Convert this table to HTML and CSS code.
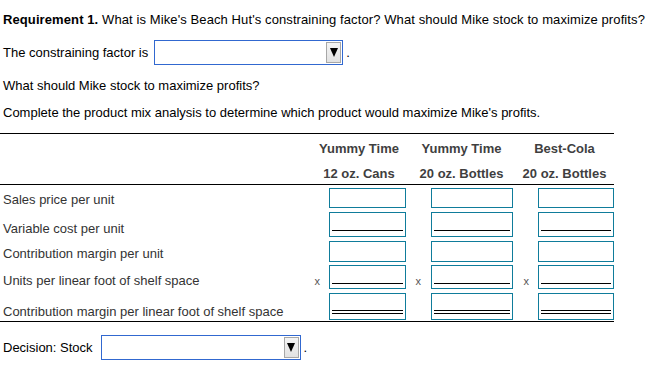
FILE: index.html
```html
<!DOCTYPE html>
<html lang="en">
<head>
    <meta charset="UTF-8">
    <title>Product Mix Analysis</title>
    <link rel="stylesheet" href="styles.css">
</head>
<body>
    <p class="req"><b>Requirement 1.</b> What is Mike's Beach Hut's constraining factor? What should Mike stock to maximize profits?</p>
    <div class="pick first">
        <span>The constraining factor is</span>
        <span class="select">
            <span class="arrow">
                <svg width="8" height="9" viewBox="0 0 8 9"><polygon points="0,0 8,0 4,9" fill="#000"/></svg>
            </span>
        </span>
        <span>.</span>
    </div>
    <p class="q">What should Mike stock to maximize profits?</p>
    <p class="intro">Complete the product mix analysis to determine which product would maximize Mike's profits.</p>

    <table class="mix">
        <colgroup>
            <col class="c-label">
            <col class="c-x1"><col class="c-in1">
            <col class="c-x2"><col class="c-in2">
            <col class="c-x3"><col class="c-in3">
        </colgroup>
        <thead>
            <tr class="h1">
                <th></th>
                <th colspan="2">Yummy Time</th>
                <th colspan="2">Yummy Time</th>
                <th colspan="2">Best-Cola</th>
            </tr>
            <tr class="h2">
                <th></th>
                <th colspan="2">12 oz. Cans</th>
                <th colspan="2">20 oz. Bottles</th>
                <th colspan="2">20 oz. Bottles</th>
            </tr>
        </thead>
        <tbody>
            <tr class="r1">
                <td class="label">Sales price per unit</td>
                <td></td><td><div class="box w1"></div></td>
                <td></td><td><div class="box w2"></div></td>
                <td></td><td><div class="box w3"></div></td>
            </tr>
            <tr class="r2">
                <td class="label">Variable cost per unit</td>
                <td></td><td><div class="box w1"><span class="rule"></span></div></td>
                <td></td><td><div class="box w2"><span class="rule"></span></div></td>
                <td></td><td><div class="box w3"><span class="rule"></span></div></td>
            </tr>
            <tr class="r3">
                <td class="label">Contribution margin per unit</td>
                <td></td><td><div class="box w1"></div></td>
                <td></td><td><div class="box w2"></div></td>
                <td></td><td><div class="box w3"></div></td>
            </tr>
            <tr class="r4">
                <td class="label">Units per linear foot of shelf space</td>
                <td class="x x1">x</td><td><div class="box w1"><span class="rule"></span></div></td>
                <td class="x x2">x</td><td><div class="box w2"><span class="rule"></span></div></td>
                <td class="x x3">x</td><td><div class="box w3"><span class="rule"></span></div></td>
            </tr>
            <tr class="r5">
                <td class="label">Contribution margin per linear foot of shelf space</td>
                <td></td><td><div class="box w1"><span class="rule double"></span></div></td>
                <td></td><td><div class="box w2"><span class="rule double"></span></div></td>
                <td></td><td><div class="box w3"><span class="rule double"></span></div></td>
            </tr>
        </tbody>
    </table>

    <div class="pick decision">
        <span>Decision: Stock</span>
        <span class="select">
            <span class="arrow">
                <svg width="8" height="9" viewBox="0 0 8 9"><polygon points="0,0 8,0 4,9" fill="#000"/></svg>
            </span>
        </span>
        <span>.</span>
    </div>
</body>
</html>
```

FILE: styles.css
```css
body {
    margin: 0;
    font-family: "Liberation Sans", Arial, sans-serif;
    font-size: 13px;
    line-height: 16px;
    color: #000;
}
p {
    margin: 0;
    padding-left: 3px;
}
.req {
    margin-top: 12px;
    letter-spacing: .1px;
}
.q {
    margin-top: 13px;
}
.intro {
    margin-top: 11px;
}

/* text + dropdown on one line */
.pick {
    display: flex;
    align-items: center;
    padding-left: 3px;
    height: 25px;
}
.pick.first {
    margin-top: 12px;
}
.pick.decision {
    margin-top: 13px;
}
.select {
    box-sizing: border-box;
    width: 189px;
    height: 25px;
    border: 1px solid #3168d0;
    background: #fff;
    display: flex;
    justify-content: flex-end;
    align-items: center;
    padding-right: 1px;
    margin: 0 3px 0 6px;
}
.decision .select {
    width: 200px;
    margin-left: 8px;
}
.arrow {
    box-sizing: border-box;
    width: 15px;
    height: 21px;
    border: 1px solid #a7a7a7;
    background: linear-gradient(#f4f4f4, #e2e2e2);
    display: flex;
    align-items: center;
    justify-content: center;
}

/* analysis table */
.mix {
    margin-top: 12px;
    width: 614px;
    table-layout: fixed;
    border-spacing: 0;
    border-top: 1px solid #000;
}
.c-label { width: 310px; }
.c-x1 { width: 19px; }
.c-in1 { width: 79px; }
.c-x2 { width: 23px; }
.c-in2 { width: 84px; }
.c-x3 { width: 23px; }
.c-in3 { width: 76px; }

.mix th {
    font-weight: bold;
    color: #3f3f3f;
    text-align: center;
    padding: 0;
    white-space: nowrap;
}
.h1 th {
    padding: 7px 0 4px;
}
.h2 th {
    padding: 5px 0 2px;
    border-bottom: 1px solid #000;
}
.mix td {
    padding: 3px 0 1px;
    vertical-align: bottom;
}
.mix .r4 td {
    padding-top: 2px;
}
.mix .r5 td {
    border-bottom: 1px solid #000;
}
.mix td.label {
    color: #333;
    padding-left: 3px;
    padding-bottom: 1px;
    white-space: nowrap;
}
.mix td.x {
    color: #555;
    font-size: 11px;
    text-align: right;
    padding-bottom: 1px;
}
.mix td.x1,
.mix td.x3 {
    padding-right: 9px;
}
.mix td.x2 {
    padding-right: 10px;
}

/* answer boxes */
.box {
    box-sizing: border-box;
    border: 1px solid #0f7c9b;
    background: #fff;
    height: 20px;
    display: flex;
    align-items: flex-end;
    padding: 0 2px 5px;
}
.w1 { width: 77px; }
.w2 { width: 82px; }
.w3 { width: 76px; }
.r2 .box { height: 25px; }
.r3 .box { height: 21px; }
.r4 .box { height: 24px; padding-bottom: 4px; }
.r5 .box { height: 27px; padding-bottom: 5px; }

.rule {
    display: block;
    width: 100%;
    border-top: 1px solid #000;
}
.rule.double {
    height: 2px;
    border-bottom: 1px solid #000;
}
```
